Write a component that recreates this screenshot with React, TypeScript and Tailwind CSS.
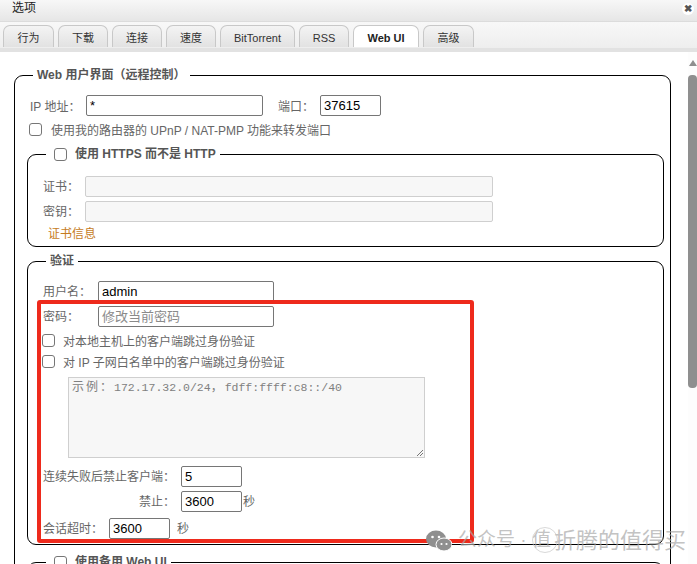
import type { ReactNode } from "react";

const tabs = [
  { label: "行为", width: "w-[51px]" },
  { label: "下载", width: "w-[50px]" },
  { label: "连接", width: "w-[50px]" },
  { label: "速度", width: "w-[50px]" },
  { label: "BitTorrent", width: "w-[75px]" },
  { label: "RSS", width: "w-[50px]" },
  { label: "Web UI", width: "w-[66px]" },
  { label: "高级", width: "w-[51px]" },
];

function Box({ className }: { className?: string }) {
  return <span className={`block shrink-0 w-[13px] h-[13px] rounded-[3px] border border-[#767676] bg-white ${className ?? ""}`} />;
}

function Field({ value, className, muted }: { value?: string; className: string; muted?: boolean }) {
  return (
    <span className={`flex items-center shrink-0 h-[21px] px-[3px] border border-[#767676] rounded-[2px] bg-white text-[13px] ${muted ? "text-[#8a8a8a]" : "text-black"} ${className}`}>
      {value}
    </span>
  );
}

function Group({ legend, className, children }: { legend: ReactNode; className: string; children?: ReactNode }) {
  return (
    <fieldset className={`border border-black rounded-[9px] ${className}`}>
      <legend className="ml-[6px] px-[4px] h-[18px] flex items-center text-[12px] font-bold text-[#555]">{legend}</legend>
      {children}
    </fieldset>
  );
}

export default function App() {
  return (
    <div
      className="w-[697px] h-[564px] overflow-hidden relative bg-white text-[12px] text-[#666]"
      style={{ fontFamily: '"Liberation Sans", "Noto Sans CJK SC", sans-serif' }}
    >
      {/* Title */}
      <div className="h-[22px] flex items-start justify-between pl-[12px] pr-[3px] bg-gradient-to-b from-[#f7f7f7] to-[#e6e6e6] border-b border-[#dcdcdc]">
        <span className="text-[12px] leading-[17px] text-[#222]">选项</span>
        <span className="mt-[3px] w-[12px] h-[12px] rounded-full bg-white flex items-center justify-center text-[10px] leading-none font-bold text-[#555]">✖</span>
      </div>

      {/* Tabs */}
      <div className="h-[30px] pt-[3px] pl-[3px] flex gap-[4px] items-start bg-gradient-to-b from-[#f8f8f8] to-[#eeeeee] border-b-[4px] border-[#e2e2e2]">
        {tabs.map((tab) => (
          <div
            key={tab.label}
            className={`h-[22px] pt-[3px] ${tab.width} flex items-center justify-center rounded-t-[7px] border border-b-0 border-[#c8c8c8] text-[11px] ${
              tab.label === "Web UI" ? "bg-white font-bold text-[#222]" : "bg-gradient-to-b from-[#f4f4f4] to-[#e2e2e2] text-[#333]"
            }`}
          >
            {tab.label}
          </div>
        ))}
      </div>

      <div className="flex h-[512px]">
        <div className="w-[688px] pl-[14px] pt-[14px] overflow-hidden">
          <Group
            className="w-[657px] pl-[12px] pr-[6px] h-[600px]"
            legend={<span className="pl-0 pr-[1px]">Web 用户界面（远程控制）</span>}
          >
            <div className="flex items-center h-[21px] mt-[11px] ml-[3px]">
              <span className="w-[56px] pt-[2px]">IP 地址：</span>
              <Field value="*" className="w-[177px]" />
              <span className="ml-[15px] w-[42px] pt-[2px]">端口：</span>
              <Field value="37615" className="w-[61px]" />
            </div>
            <div className="flex items-center h-[14px] mt-[6px] ml-[2px] gap-[9px]">
              <Box />
              <span className="pt-[4px]">使用我的路由器的 UPnP / NAT-PMP 功能来转发端口</span>
            </div>

            <Group
              className="mt-[9px] pl-[12px] h-[102px]"
              legend={
                <span className="flex items-center gap-[8px] ml-[4px]">
                  <Box />
                  使用 HTTPS 而不是 HTTP
                </span>
              }
            >
              <div className="flex items-center h-[21px] mt-[13px] ml-[3px]">
                <span className="w-[42px] pt-[1px]">证书：</span>
                <span className="block w-[408px] h-[21px] border border-[#cfcfcf] rounded-[2px] bg-[#f7f7f7]" />
              </div>
              <div className="flex items-center h-[21px] mt-[4px] ml-[3px]">
                <span className="w-[42px] pt-[1px]">密钥：</span>
                <span className="block w-[408px] h-[21px] border border-[#cfcfcf] rounded-[2px] bg-[#f7f7f7]" />
              </div>
              <div className="mt-[3px] ml-[8px] text-[#c67c1e]">证书信息</div>
            </Group>

            <Group className="mt-[5px] pl-[12px] h-[293px]" legend={<span>验证</span>}>
              <div className="pl-[3px]">
                <div className="flex items-center h-[21px] mt-[11px]">
                  <span className="w-[55px] pt-[1px]">用户名：</span>
                  <Field value="admin" className="w-[176px]" />
                </div>
                <div className="flex items-center h-[21px] mt-[4px]">
                  <span className="w-[55px] pt-[1px]">密码：</span>
                  <Field value="修改当前密码" muted className="w-[176px]" />
                </div>
                <div className="flex items-center h-[14px] mt-[6px] gap-[8px]">
                  <Box className="-ml-[1px]" />
                  <span className="pt-[4px]">对本地主机上的客户端跳过身份验证</span>
                </div>
                <div className="flex items-center h-[14px] mt-[7px] gap-[8px]">
                  <Box className="-ml-[1px]" />
                  <span className="pt-[4px]">对 IP 子网白名单中的客户端跳过身份验证</span>
                </div>
                <div
                  className="relative w-[357px] h-[81px] mt-[9px] ml-[25px] px-[3px] border border-[#cfcfcf] bg-[#f7f7f7] text-[11.5px] leading-[20px] text-[#808080]"
                  style={{ fontFamily: '"Liberation Mono", "Noto Sans CJK SC", monospace' }}
                >
                  <span className="text-[12px] tracking-[2px]">示例：</span>172.17.32.0/24<span className="text-[12px] tracking-[2px]">，</span>fdff:ffff:c8::/40
                  <svg className="absolute right-0 bottom-0" width="9" height="9" viewBox="0 0 9 9">
                    <path d="M8 2 2 8M8 5 5 8" stroke="#777" strokeWidth="1" fill="none" />
                  </svg>
                </div>
                <div className="flex items-center h-[21px] mt-[8px]">
                  <span className="w-[138px] whitespace-nowrap pt-[1px]">连续失败后禁止客户端：</span>
                  <Field value="5" className="w-[61px]" />
                </div>
                <div className="flex items-center h-[21px] mt-[4px]">
                  <span className="w-[138px] pl-[96px] pt-[1px]">禁止：</span>
                  <Field value="3600" className="w-[61px]" />
                  <span className="ml-[1px]">秒</span>
                </div>
                <div className="flex items-center h-[21px] mt-[6px]">
                  <span className="w-[66px] pt-[1px]">会话超时：</span>
                  <Field value="3600" className="w-[61px]" />
                  <span className="ml-[7px]">秒</span>
                </div>
              </div>
            </Group>

            <Group
              className="mt-[8px] pl-[12px] h-[60px]"
              legend={
                <span className="flex items-center gap-[8px] ml-[4px]">
                  <Box />
                  使用备用 Web UI
                </span>
              }
            />
          </Group>
        </div>

        {/* Scrollbar */}
        <div className="w-[9px] flex flex-col items-center pt-[8px] bg-[#fdfdfd]">
          <span className="block w-0 h-0 border-x-[4.5px] border-x-transparent border-b-[6px] border-b-[#8f8f8f]" />
          <span className="block w-[9px] h-[313px] mt-[9px] rounded-[4px] bg-[#8f8f8f]" />
        </div>
      </div>

      {/* Red annotation */}
      <div className="absolute left-[37px] top-[300px] w-[437px] h-[243px] border-[4.5px] border-[#ee2a1c] rounded-[3px]" />

      {/* Watermark */}
      <div className="absolute left-[426px] top-[524px] flex items-center gap-[6px] text-[#a8a8a8]/70 whitespace-nowrap">
        <svg width="26" height="22" viewBox="0 0 26 22">
          <ellipse cx="10" cy="9" rx="10" ry="8.5" fill="#8f8f8f" />
          <ellipse cx="18" cy="14.5" rx="8" ry="6.5" fill="#8f8f8f" stroke="#ffffff" strokeWidth="1" />
          <circle cx="6.5" cy="7" r="1.3" fill="#fff" />
          <circle cx="13" cy="7" r="1.3" fill="#fff" />
          <circle cx="15.5" cy="14" r="1.1" fill="#fff" />
          <circle cx="20.5" cy="14" r="1.1" fill="#fff" />
        </svg>
        <span className="text-[19px]">公众号 · 值</span>
        <span className="text-[22px] -ml-[3px]">折腾的值得买</span>
      </div>
      <div className="absolute left-[532px] top-[527px] w-[26px] h-[26px] rounded-full border border-[#c8c8c8]/70" />
    </div>
  );
}
